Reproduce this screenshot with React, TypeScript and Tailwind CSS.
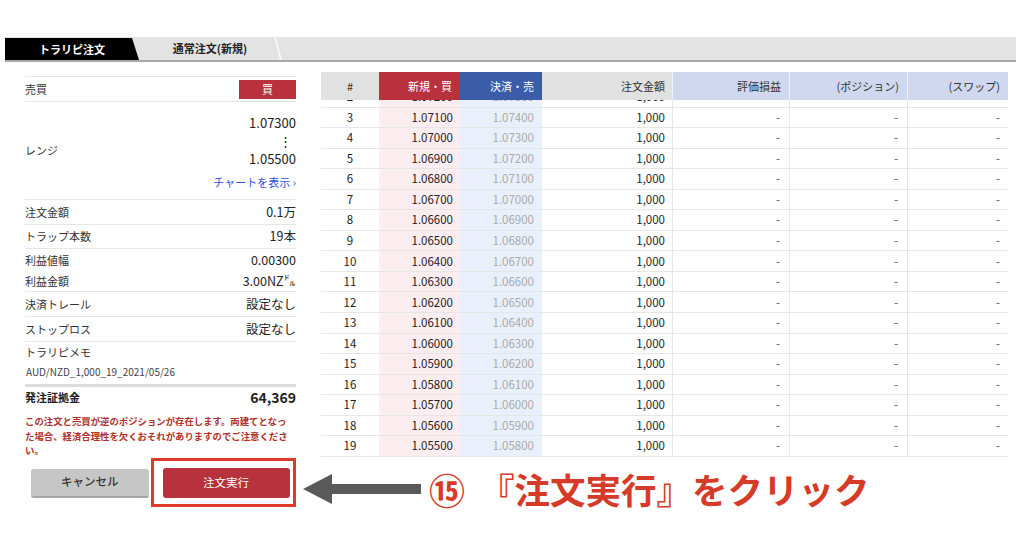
import React from 'react'

const rows = Array.from({ length: 18 }, (_, i) => {
  const n = i + 2
  const buy = 107400 - n * 100
  return { n, buy: (buy / 100000).toFixed(5), sell: ((buy + 300) / 100000).toFixed(5) }
})

function Row({ label, value, className = '' }: { label: string; value: React.ReactNode; className?: string }) {
  return (
    <div className={`flex items-center justify-between ${className}`}>
      <span className="text-[11px] text-[#333]">{label}</span>
      <span className="text-[12.5px] text-[#222]">{value}</span>
    </div>
  )
}

const cols = 'grid grid-cols-[58px_81px_82px_130px_117px_118px_101px]'

export default function App() {
  return (
    <div className="w-[1024px] h-[536px] bg-white overflow-hidden font-['Noto_Sans_CJK_JP',sans-serif] text-[#222]">
      {/* tabs */}
      <div className="pt-[37px]">
        <div className="ml-[5px] w-[1011px] h-[25px] bg-[#e3e3e3] border-b-2 border-[#a9a9a9] flex items-end">
          <div className="w-[134px] h-[22px] bg-black text-white text-[11px] font-bold flex items-center justify-center [clip-path:polygon(0_0,127px_0,134px_100%,0_100%)]">
            トラリピ注文
          </div>
          <div className="relative w-[144px] h-[23px] -ml-[1px] text-[11px] font-bold text-[#222] flex items-center justify-center">
            通常注文(新規)
            <svg className="absolute right-0 top-0" width="8" height="23" viewBox="0 0 8 23">
              <line x1="1" y1="0" x2="7" y2="23" stroke="#f6f6f6" strokeWidth="2" />
            </svg>
          </div>
        </div>
      </div>

      <div className="flex mt-[10px]">
        {/* left panel */}
        <div className="ml-[25px] w-[271px] pt-[4px]">
          <div className="border-t border-[#e6e6e6]">
            <div className="h-[25px] flex items-center justify-between border-b border-[#e6e6e6]">
              <span className="text-[11px] text-[#333]">売買</span>
              <span className="w-[57px] h-[19px] bg-[#b8313c] text-white text-[11px] flex items-center justify-center">買</span>
            </div>
            <div className="h-[98px] flex items-center justify-between border-b border-[#e6e6e6]">
              <span className="text-[11px] text-[#333]">レンジ</span>
              <div className="self-stretch flex flex-col items-end pt-[12px] text-[13px] leading-[18px]">
                <span>1.07300</span>
                <span className="pr-[4px]">⋮</span>
                <span>1.05500</span>
                <span className="mt-[5px] text-[11px] text-[#2f52dd]">チャートを表示 ›</span>
              </div>
            </div>
            <Row label="注文金額" value="0.1万" className="h-[25px] border-b border-[#e6e6e6]" />
            <Row label="トラップ本数" value="19本" className="h-[24px] border-b border-[#e6e6e6]" />
            <Row label="利益値幅" value="0.00300" className="h-[22px]" />
            <Row label="利益金額" value="3.00NZ㌦" className="h-[21px] border-b border-[#e6e6e6]" />
            <Row label="決済トレール" value="設定なし" className="h-[25px] border-b border-[#e6e6e6]" />
            <Row label="ストップロス" value="設定なし" className="h-[25px] border-b border-[#e6e6e6]" />
            <div className="h-[45px] pt-[2px] border-b-[3px] border-[#dcdcdc]">
              <div className="text-[11px] leading-[16px] text-[#333]">トラリピメモ</div>
              <div className="mt-[4px] text-[10px] leading-[16px] text-[#444] pl-[1px]">AUD/NZD_1,000_19_2021/05/26</div>
            </div>
            <div className="h-[20px] flex items-center justify-between">
              <span className="text-[11px] font-bold">発注証拠金</span>
              <span className="text-[14px] font-bold">64,369</span>
            </div>
          </div>
          <p className="mt-[7px] text-[9.4px] leading-[14.5px] font-bold text-[#b0302c] whitespace-nowrap">
            この注文と売買が逆のポジションが存在します。両建てとなっ
            <br />
            た場合、経済合理性を欠くおそれがありますのでご注意くださ
            <br />
            い。
          </p>
          <div className="flex items-start">
            <button className="mt-[11px] ml-[6px] w-[118px] h-[29px] rounded-[3px] bg-[#c6c6c6] border-b-2 border-[#a5a5a5] text-[11.5px] text-[#333] font-medium">
              キャンセル
            </button>
            <div className="ml-[2px] w-[146px] h-[49px] border-[3px] border-[#e0392b]">
              <button className="mt-[7px] ml-[9px] w-[127px] h-[30px] rounded-[3px] bg-[#b7323d] text-white text-[11.5px]">
                注文実行
              </button>
            </div>
          </div>
        </div>

        {/* table */}
        <div className="ml-[25px] w-[687px]">
          <div className={`${cols} h-[28px] text-[11px]`}>
            <div className="bg-[#e1e1e1] flex items-center justify-center text-[#333]">#</div>
            <div className="bg-[#b8313c] text-white flex items-center justify-end pr-[8px]">新規・買</div>
            <div className="bg-[#3b5ca8] text-white flex items-center justify-end pr-[8px]">決済・売</div>
            <div className="bg-[#e1e1e1] flex items-center justify-end pr-[7px] text-[#333]">注文金額</div>
            <div className="bg-[#cfd8ee] border-l border-[#eef1f8] flex items-center justify-end pr-[8px] text-[#333]">評価損益</div>
            <div className="bg-[#cfd8ee] border-l border-[#eef1f8] flex items-center justify-end pr-[8px] text-[#333]">(ポジション)</div>
            <div className="bg-[#cfd8ee] border-l border-[#eef1f8] flex items-center justify-end pr-[8px] text-[#333]">(スワップ)</div>
          </div>
          <div className="h-[357px] overflow-hidden border-b border-[#e6e6e6]">
            <div className="-mt-[13px]">
              {rows.map((r) => (
                <div key={r.n} className={`${cols} h-[20.56px] text-[11.5px] border-b border-[#e6e6e6]`}>
                  <div className="flex items-center justify-center">{r.n}</div>
                  <div className="bg-[#fcedf1] flex items-center justify-end pr-[7px]">{r.buy}</div>
                  <div className="bg-[#e9f0fb] flex items-center justify-end pr-[8px] text-[#aaa]">{r.sell}</div>
                  <div className="flex items-center justify-end pr-[7px]">1,000</div>
                  <div className="border-l border-[#e6e6e6] flex items-center justify-end pr-[9px] text-[#555]">-</div>
                  <div className="border-l border-[#e6e6e6] flex items-center justify-end pr-[9px] text-[#555]">-</div>
                  <div className="border-l border-[#e6e6e6] flex items-center justify-end pr-[8px] text-[#555]">-</div>
                </div>
              ))}
            </div>
          </div>

          {/* annotation */}
          <div className="-ml-[18px] mt-[14px] flex items-center text-[#d63a28] font-bold">
            <svg width="118" height="30" viewBox="0 0 118 30">
              <polygon points="0,15 29,0 29,30" fill="#5a5a5a" />
              <rect x="28" y="10" width="90" height="10" fill="#5a5a5a" />
            </svg>
            <span className="ml-[8px] text-[36px] leading-none">⑮</span>
            <span className="ml-[14px] text-[35.5px] leading-none">『注文実行』をクリック</span>
          </div>
        </div>
      </div>
    </div>
  )
}
